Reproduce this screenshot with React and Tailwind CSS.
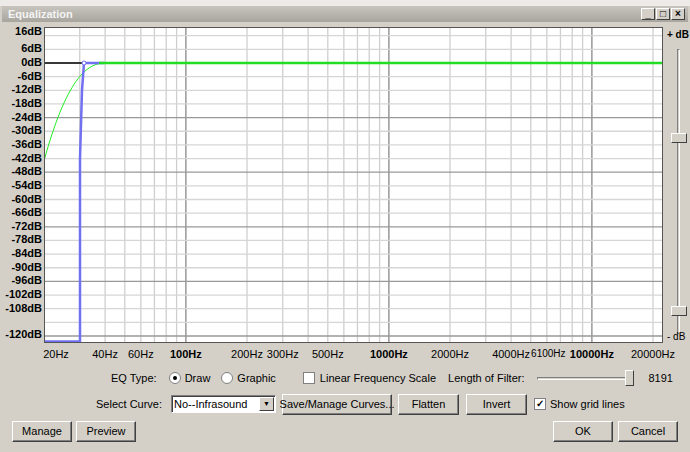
import React from "react";

const W = 619, H = 316;
const dec = 203;
const fx = (f) => dec * Math.log10(f / 20);
const dy = (d) => 36 + (-d) * 2.275;

function Chart() {
  const v = [];
  for (let e = 10; e <= 10000; e *= 10) {
    for (let m = 1; m <= 9; m++) {
      const f = e * m;
      if (f < 20 || f > 22050) continue;
      v.push(<line key={"v" + f} x1={fx(f)} x2={fx(f)} y1={0} y2={H} stroke={m === 1 ? "#888" : "#cfcfcf"} strokeWidth={1.3} />);
    }
  }
  const h = [];
  for (let d = 12; d >= -120; d -= 6) {
    h.push(<line key={"h" + d} x1={0} x2={W} y1={dy(d)} y2={dy(d)} stroke={d % 24 === 0 && d !== 0 ? "#999" : "#d6d6d6"} strokeWidth={1.3} />);
  }
  const g = [];
  for (let x = 0; x <= 62; x += 2) {
    const t = x / 62;
    const d = -43 * Math.pow(1 - t, 2.3);
    g.push(`${x},${dy(d)}`);
  }
  g.push(`${W},${dy(0)}`);
  return (
    <svg width={W} height={H} className="block bg-white shrink-0">
      {v}
      {h}
      <polyline points={g.join(" ")} fill="none" stroke="#22ee22" strokeWidth="1" />
      <line x1="0" x2="40" y1={dy(0)} y2={dy(0)} stroke="#000" strokeWidth="1.5" />
      <polyline points={`0,${H - 1.5} 36,${H - 1.5} 36,${dy(-42)} 38,${dy(-12)} 40,${dy(0)} 60,${dy(0)}`} fill="none" stroke="#7070f0" strokeWidth="2.5" />
      <circle cx="40" cy={dy(0)} r="2" fill="white" stroke="#7070f0" />
      <line x1="55" x2={W} y1={dy(0)} y2={dy(0)} stroke="#22dd22" strokeWidth="2.5" />
      <rect x="0.5" y="0.5" width={W - 1} height={H - 1} fill="none" stroke="#555" />
    </svg>
  );
}

const dbs = [];
for (let d = 6; d >= -120; d -= 6) dbs.push(d);
const hz = [[20, "20Hz"], [40, "40Hz"], [60, "60Hz"], [100, "100Hz", 1], [200, "200Hz"], [300, "300Hz"], [500, "500Hz"], [1000, "1000Hz", 1], [2000, "2000Hz"], [4000, "4000Hz"], [6100, "6100Hz", 2], [10000, "10000Hz", 1], [20000, "20000Hz"]];

const Btn = ({ children, w, cls = "" }) => (
  <div className={`h-[21px] shrink-0 whitespace-nowrap flex items-center justify-center bg-[#d4d0c8] border border-t-white border-l-white border-b-[#404040] border-r-[#404040] shadow-[inset_-1px_-1px_0_#808080] ${cls}`} style={{ width: w }}>{children}</div>
);

export default function App() {
  return (
    <div className="w-[690px] h-[452px] bg-[#d4d0c8] text-[11px] text-black overflow-hidden flex flex-col whitespace-nowrap" style={{ fontFamily: "'Liberation Sans', Arial, sans-serif" }}>
      <div className="h-[6px] bg-[#ecebe8]" />
      <div className="h-[16px] bg-gradient-to-b from-[#c8c5be] to-[#a8a59e] flex items-center pl-[6px] pr-[3px] mx-[2px]">
        <span className="text-[#f4f4f4] font-bold text-[11px]">Equalization</span>
        <div className="ml-auto flex gap-[1px]">
          {["_", "□", "×"].map((s, i) => (
            <div key={i} className="w-[14px] h-[12px] bg-[#d4d0c8] border border-t-white border-l-white border-b-[#404040] border-r-[#404040] flex items-center justify-center text-[10px] font-bold leading-none">{s}</div>
          ))}
        </div>
      </div>
      <div className="flex mt-[5px]">
        <div className="w-[44px] shrink-0 relative h-[316px]">
          <div className="absolute right-[2px] font-bold text-right leading-none" style={{ top: -1 }}>16dB</div>
          {dbs.map((d) => (
            d === -114 ? null :
            <div key={d} className="absolute right-[2px] text-right leading-none font-bold" style={{ top: dy(d) - 6 + (d === -120 ? -1 : 0) }}>{d}dB</div>
          ))}
        </div>
        <Chart />
        <div className="w-[27px] shrink-0 relative">
          <div className="absolute left-[4px] top-[0px] text-[10px] font-bold">+ dB</div>
          <div className="absolute left-[14px] top-[22px] w-[3px] h-[285px] border border-[#808080] border-r-white bg-[#d4d0c8]" />
          <div className="absolute left-[8px] top-[106px] w-[16px] h-[10px] bg-[#d4d0c8] border border-t-white border-l-white border-b-[#404040] border-r-[#404040]" />
          <div className="absolute left-[8px] top-[279px] w-[16px] h-[10px] bg-[#d4d0c8] border border-t-white border-l-white border-b-[#404040] border-r-[#404040]" />
          <div className="absolute left-[4px] top-[302px] text-[10px]">- dB</div>
        </div>
      </div>
      <div className="relative h-[20px] ml-[44px]">
        {hz.map(([f, t, b]) => (
          <div key={f} className={`absolute top-[3px] -translate-x-1/2 ${b === 1 ? "font-bold" : ""} ${b === 2 ? "text-[10px]" : ""}`} style={{ left: fx(f) + (f === 20 ? 12 : 0) }}>{t}</div>
        ))}
      </div>
      <div className="flex items-center h-[22px] mt-[4px] pl-[111px]">
        <span>EQ Type:</span>
        <span className="ml-[12px] w-[12px] h-[12px] rounded-full bg-white border border-[#808080] flex items-center justify-center"><span className="w-[4px] h-[4px] rounded-full bg-black" /></span>
        <span className="ml-[4px]">Draw</span>
        <span className="ml-[11px] w-[12px] h-[12px] rounded-full bg-white border border-[#808080]" />
        <span className="ml-[4px]">Graphic</span>
        <span className="ml-[27px] w-[12px] h-[12px] bg-white border border-[#808080]" />
        <span className="ml-[5px]">Linear Frequency Scale</span>
        <span className="ml-[12px]">Length of Filter:</span>
        <div className="ml-[13px] relative w-[96px] h-[20px] shrink-0">
          <div className="absolute top-[9px] left-0 w-[94px] h-[3px] border border-[#808080] border-b-white border-r-white" />
          <div className="absolute left-[88px] top-[2px] w-[9px] h-[16px] bg-[#d4d0c8] border border-t-white border-l-white border-b-[#404040] border-r-[#404040]" />
        </div>
        <span className="ml-[15px]">8191</span>
      </div>
      <div className="flex items-center h-[22px] mt-[4px] pl-[96px]">
        <span>Select Curve:</span>
        <div className="ml-[9px] w-[105px] shrink-0 h-[18px] bg-white border border-[#808080] border-b-white border-r-white flex items-center pl-[2px] shadow-[inset_1px_1px_0_#404040]">
          <span>No--Infrasound</span>
          <div className="ml-auto mr-[1px] w-[15px] h-[14px] bg-[#d4d0c8] border border-t-white border-l-white border-b-[#404040] border-r-[#404040] flex items-center justify-center text-[7px]">▼</div>
        </div>
        <Btn w={110} cls="ml-[6px]">Save/Manage Curves...</Btn>
        <Btn w={61} cls="ml-[6px]">Flatten</Btn>
        <Btn w={61} cls="ml-[7px]">Invert</Btn>
        <span className="ml-[7px] w-[12px] h-[12px] bg-white border border-[#808080] flex items-center justify-center text-[10px] leading-none font-bold">✓</span>
        <span className="ml-[4px]">Show grid lines</span>
      </div>
      <div className="flex items-center h-[22px] mt-[5px] px-[12px]">
        <Btn w={60}>Manage</Btn>
        <Btn w={60} cls="ml-[4px]">Preview</Btn>
        <Btn w={60} cls="ml-auto border-black">OK</Btn>
        <Btn w={60} cls="ml-[5px]">Cancel</Btn>
      </div>
    </div>
  );
}
